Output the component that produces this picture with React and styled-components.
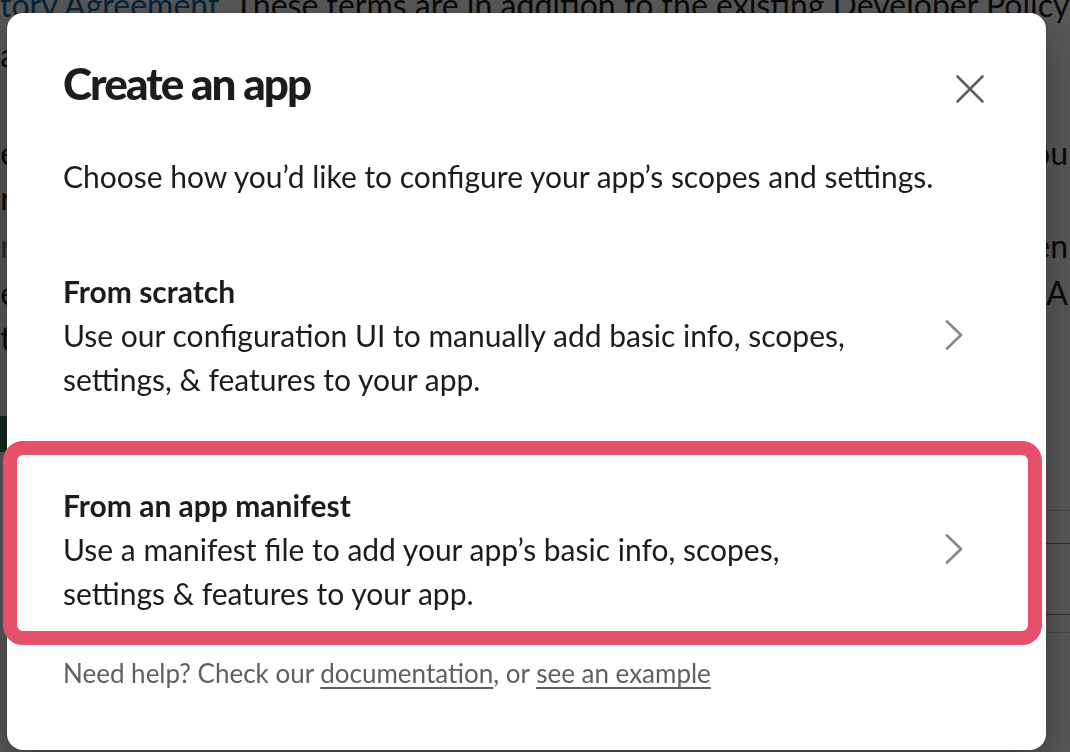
import React from 'react'
import styled, { createGlobalStyle } from 'styled-components'

const GlobalStyle = createGlobalStyle`
  html, body {
    margin: 0;
    padding: 0;
    overflow: hidden;
    background: #fff;
  }
  body {
    font-family: Lato, "Noto Sans", "Liberation Sans", sans-serif;
    color: #1d1c1d;
  }
`

// page behind the dialog
const Page = styled.div`
  width: 1070px;
  height: 752px;
  overflow: hidden;
  font-size: 32px;
  color: #1d1c1d;
  padding-top: 1px;
`
const PageRow = styled.div`
  display: flex;
  justify-content: space-between;
  height: 45px;
  line-height: 45px;
  white-space: nowrap;
  margin-top: ${p => p.$gap || 0}px;
  &:first-child { margin-top: -19px; }
`
const PageLeft = styled.span`
  margin-left: -8px;
  color: ${p => (p.$muted ? '#7a7a7a' : '#1d1c1d')};
`
const PageRight = styled.span`
  margin-right: 2px;
`
const PageLink = styled.span`
  color: #1264a3;
`
const PageButton = styled.div`
  margin-top: 56px;
  margin-left: -20px;
  width: 200px;
  height: 36px;
  background: #3a7a5c;
  border-radius: 4px;
`
const PageTable = styled.div`
  margin: 24px 0 0 520px;
`
const TableLine = styled.div`
  height: ${p => p.$h}px;
  border-bottom: 1px solid ${p => (p.$dark ? '#8e8e8e' : '#dcdcdc')};
`

const Overlay = styled.div`
  position: fixed;
  inset: 0;
  background: rgba(0, 0, 0, 0.65);
`

const Modal = styled.div`
  position: fixed;
  left: 7px;
  top: 13px;
  width: 1039px;
  height: 737px;
  background: #fff;
  border-radius: 16px;
  box-shadow: 0 0 0 1px rgba(29, 28, 29, 0.13), 0 18px 48px 0 rgba(0, 0, 0, 0.35);
`
const Header = styled.div`
  display: flex;
  justify-content: space-between;
  align-items: flex-start;
  padding: 42px 54px 0 56px;
`
const Title = styled.h1`
  margin: 0;
  font-size: 44px;
  line-height: 56px;
  font-weight: 900;
  letter-spacing: -1.9px;
  color: #1d1c1d;
`
const CloseButton = styled.button`
  margin-top: 12px;
  width: 44px;
  height: 44px;
  display: flex;
  align-items: center;
  justify-content: center;
  border: none;
  background: none;
  padding: 0;
  cursor: pointer;
`
const Intro = styled.p`
  margin: 43px 0 0;
  padding: 0 56px;
  font-size: 30px;
  line-height: 44px;
`
const OptionList = styled.div`
  margin-top: 23px;
`
const Option = styled.div`
  position: relative;
  display: flex;
  align-items: center;
  padding: 48px 82px 34px 56px;
  cursor: pointer;
  ${p => p.$highlighted && `
    &::after {
      content: '';
      position: absolute;
      top: 6px;
      bottom: 4px;
      left: -4px;
      right: 4px;
      border: 14px solid #e5506a;
      border-radius: 20px;
      pointer-events: none;
    }
  `}
`
const OptionText = styled.div`
  flex: 1;
  max-width: 800px;
  margin-right: auto;
  font-size: 30px;
  line-height: 44px;
`
const OptionTitle = styled.div`
  font-weight: 700;
`
const OptionDesc = styled.div`
  font-weight: 400;
`
const Help = styled.p`
  margin: 6px 0 0;
  padding: 0 56px;
  font-size: 26px;
  line-height: 36px;
  color: #616061;
`
const HelpLink = styled.a`
  color: #616061;
  text-decoration: underline;
  text-underline-offset: 4px;
  text-decoration-thickness: 2px;
`

const Chevron = () => (
  <svg width="20" height="32" viewBox="0 0 20 32" fill="none">
    <path d="M3 2.5 L17 16 L3 29.5" stroke="#868686" strokeWidth="2.6" strokeLinecap="round" strokeLinejoin="round" />
  </svg>
)

const CloseIcon = () => (
  <svg width="28" height="28" viewBox="0 0 28 28" fill="none">
    <path d="M1.5 1.5 L26.5 26.5 M26.5 1.5 L1.5 26.5" stroke="#616061" strokeWidth="2.6" strokeLinecap="round" />
  </svg>
)

const options = [
  {
    title: 'From scratch',
    desc: 'Use our configuration UI to manually add basic info, scopes, settings, & features to your app.',
  },
  {
    title: 'From an app manifest',
    desc: 'Use a manifest file to add your app’s basic info, scopes, settings & features to your app.',
    highlighted: true,
  },
]

const App = () => {
  return (
    <>
      <GlobalStyle />
      <Page>
        <PageRow>
          <span><PageLink>tory Agreement</PageLink>. These terms are in addition to the existing Developer Policy</span>
        </PageRow>
        <PageRow $gap={5}><PageLeft>&nbsp;a</PageLeft></PageRow>
        <PageRow $gap={53}><PageLeft>&nbsp;e</PageLeft><PageRight>you</PageRight></PageRow>
        <PageRow><PageLeft>&nbsp;r</PageLeft></PageRow>
        <PageRow $gap={3}><PageLeft $muted>&nbsp;r</PageLeft><PageRight>nen</PageRight></PageRow>
        <PageRow $gap={2}><PageLeft>&nbsp;e</PageLeft><PageRight>e A</PageRight></PageRow>
        <PageRow><PageLeft>&nbsp;t</PageLeft></PageRow>
        <PageButton />
        <PageTable>
          <TableLine $h={34} />
          <TableLine $h={32} $dark />
          <TableLine $h={70} $dark />
          <TableLine $h={17} />
        </PageTable>
      </Page>
      <Overlay />
      <Modal role="dialog">
        <Header>
          <Title>Create an app</Title>
          <CloseButton aria-label="Close"><CloseIcon /></CloseButton>
        </Header>
        <Intro>Choose how you’d like to configure your app’s scopes and settings.</Intro>
        <OptionList>
          {options.map(o => (
            <Option key={o.title} $highlighted={o.highlighted}>
              <OptionText>
                <OptionTitle>{o.title}</OptionTitle>
                <OptionDesc>{o.desc}</OptionDesc>
              </OptionText>
              <Chevron />
            </Option>
          ))}
        </OptionList>
        <Help>
          Need help? Check our <HelpLink href="#">documentation</HelpLink>, or <HelpLink href="#">see an example</HelpLink>
        </Help>
      </Modal>
    </>
  )
}

export default App
